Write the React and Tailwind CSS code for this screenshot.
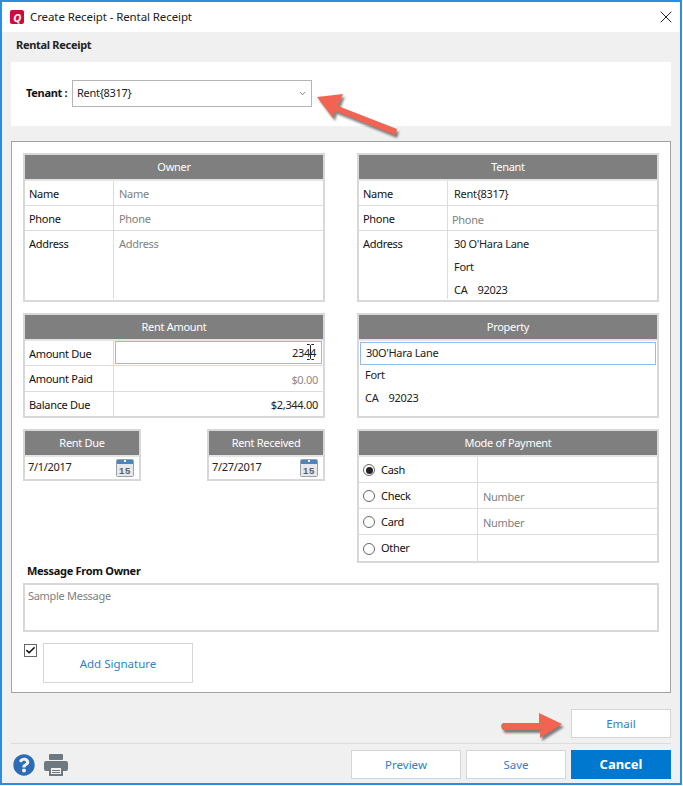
import React from 'react';
import { X, ChevronDown, Check } from 'lucide-react';
import { FaQuestionCircle } from 'react-icons/fa';

const Head = ({ children }) => (
  <div className="h-[26px] bg-[#7f7f7f] flex items-center justify-center text-white border-b-2 border-[#e4e4e4]">{children}</div>
);

const Row = ({ label, height, children, last }) => (
  <div className={`flex ${last ? '' : 'border-b border-[#dcdcdc]'}`} style={{ height }}>
    <div className="w-[89px] pl-[4px] pt-[5px] border-r border-[#dcdcdc] text-[#111]">{label}</div>
    <div className="flex-1">{children}</div>
  </div>
);

const Calendar = () => (
  <svg width="18" height="18" viewBox="0 0 18 18">
    <rect x="0.5" y="0.5" width="17" height="17" rx="1" fill="#e6e8ea" stroke="#98a2a8" />
    <rect x="1" y="1" width="16" height="4" fill="#4a86bb" />
    <rect x="8" y="1" width="2" height="2" fill="#fff" />
    <text x="9" y="15" textAnchor="middle" fontSize="9.5" fontWeight="700" letterSpacing="0.6" fill="#55606a" fontFamily="Liberation Sans">15</text>
  </svg>
);

const Printer = () => (
  <svg width="24" height="22" viewBox="0 0 24 22" className="ml-[9px]">
    <rect x="5" y="0" width="14" height="6" rx="1" fill="#6e7880" />
    <rect x="0" y="7" width="24" height="10" rx="2" fill="#6e7880" />
    <rect x="5" y="13" width="14" height="9" fill="#6e7880" />
    <rect x="7" y="14" width="10" height="6" fill="#f0f0f0" />
    <rect x="8" y="16" width="8" height="1" fill="#6e7880" />
    <rect x="8" y="18" width="8" height="1" fill="#6e7880" />
  </svg>
);

const IBeam = () => (
  <svg className="absolute right-[6px] top-[2px]" width="9" height="16" viewBox="0 0 9 16" fill="none" stroke="#222" strokeWidth="1">
    <path d="M1 0.5 H3.5 L4.5 1.5 L5.5 0.5 H8 M4.5 1.5 V14.5 M1 15.5 H3.5 L4.5 14.5 L5.5 15.5 H8" />
  </svg>
);

const DateBox = ({ title, value }) => (
  <div className="w-[118px] h-[52px] border-2 border-[#d8d8d8]">
    <Head>{title}</Head>
    <div className="flex justify-between pl-[3px] pr-[5px] pt-[2px] text-[#222]">
      <span>{value}</span>
      <Calendar />
    </div>
  </div>
);

const Radio = ({ label, on, value, height, last }) => (
  <div className={`flex ${last ? '' : 'border-b border-[#dcdcdc]'}`} style={{ height }}>
    <div className="w-[119px] pl-[4px] pt-[1px] flex items-center gap-[6px] border-r border-[#dcdcdc] text-[#111]">
      <span className="w-[12px] h-[12px] rounded-full border border-[#666] flex items-center justify-center">
        {on && <span className="w-[7px] h-[7px] rounded-full bg-[#222]" />}
      </span>
      {label}
    </div>
    <div className="flex-1 pl-[5px] pt-[6px] text-[#808080]">{value}</div>
  </div>
);

const FootBtn = ({ children, className = '' }) => (
  <button className={`h-[29px] pt-[1px] bg-white border border-[#d6d6d6] text-[#2f7fd0] text-[11.5px] tracking-normal ${className}`}>{children}</button>
);

export default function App() {
  return (
    <div className="relative w-[682px] h-[785px] border-2 border-[#2b8fe0] bg-[#f0f0f0] text-[11px] tracking-[-0.3px] overflow-hidden" style={{ fontFamily: '"Noto Sans", sans-serif' }}>
      {/* title bar */}
      <div className="h-[30px] bg-white flex items-center pl-[8px] pr-[4px]">
        <div className="w-[14px] h-[14px] rounded-[2px] bg-[#d2093c] flex items-center justify-center text-white font-bold italic text-[11px] leading-none">Q</div>
        <span className="ml-[6px] text-[11.5px] tracking-[-0.1px] text-[#222]">Create Receipt - Rental Receipt</span>
        <X className="ml-auto w-[20px] h-[20px] text-[#222]" strokeWidth={1.2} />
      </div>

      <div className="px-[9px]">
        <div className="h-[30px] pt-[5px] pl-[5px] font-bold text-[#222]">Rental Receipt</div>

        <div className="h-[64px] bg-white flex items-start pt-[18px] pl-[15px] mb-[15px]">
          <span className="font-bold text-[#111] w-[46px] pt-[5px]">Tenant :</span>
          <div className="w-[240px] h-[27px] border border-[#b4b4b4] flex items-center justify-between pl-[4px] pr-[4px] text-[#222]">
            Rent{'{'}8317{'}'}
            <ChevronDown className="w-[9px] h-[9px] text-[#555]" />
          </div>
        </div>

        {/* main form */}
        <div className="h-[552px] bg-white border border-[#a3a3a3] p-[11px]">
          <div className="grid grid-cols-[302px_302px] justify-between">
            <div className="flex flex-col gap-[11px]">
              <div className="h-[149px] border-2 border-[#d8d8d8]">
                <Head>Owner</Head>
                <Row label="Name" height={25}><div className="pl-[5px] pt-[5px] text-[#808080]">Name</div></Row>
                <Row label="Phone" height={25}><div className="pl-[5px] pt-[5px] text-[#808080]">Phone</div></Row>
                <Row label="Address" height={68} last><div className="pl-[5px] pt-[5px] text-[#808080]">Address</div></Row>
              </div>
              <div className="h-[105px] border-2 border-[#d8d8d8]">
                <Head>Rent Amount</Head>
                <Row label="Amount Due" height={25}>
                  <div className="relative h-[23px] mx-[1px] border border-[#8ebcf0] text-right pr-[5px] pt-[3px] text-[#222]">
                    2344
                    <IBeam />
                  </div>
                </Row>
                <Row label="Amount Paid" height={26}><div className="text-right pr-[5px] pt-[6px] text-[#8a8a8a]">$0.00</div></Row>
                <Row label="Balance Due" height={25} last><div className="text-right pr-[5px] pt-[5px] text-[#222]">$2,344.00</div></Row>
              </div>
              <div className="flex justify-between">
                <DateBox title="Rent Due" value="7/1/2017" />
                <DateBox title="Rent Received" value="7/27/2017" />
              </div>
            </div>

            <div className="flex flex-col gap-[11px]">
              <div className="h-[149px] border-2 border-[#d8d8d8]">
                <Head>Tenant</Head>
                <Row label="Name" height={25}><div className="pl-[6px] pt-[5px] text-[#222]">Rent{'{'}8317{'}'}</div></Row>
                <Row label="Phone" height={25}><div className="pl-[4px] pt-[6px] text-[#808080]">Phone</div></Row>
                <Row label="Address" height={68} last>
                  <div className="pl-[6px] pt-[5px] text-[#222] flex flex-col gap-[6.5px]">
                    <span>30 O'Hara Lane</span>
                    <span>Fort</span>
                    <span>CA &nbsp;&nbsp; 92023</span>
                  </div>
                </Row>
              </div>
              <div className="h-[105px] border-2 border-[#d8d8d8]">
                <Head>Property</Head>
                <div className="h-[23px] mx-[1px] mt-[1px] border border-[#8ebcf0] pl-[5px] pt-[2px] text-[#222]">30O'Hara Lane</div>
                <div className="pl-[6px] pt-[2px] text-[#222] flex flex-col gap-[6.5px]">
                  <span>Fort</span>
                  <span>CA &nbsp;&nbsp; 92023</span>
                </div>
              </div>
              <div className="h-[134px] border-2 border-[#d8d8d8]">
                <Head>Mode of Payment</Head>
                <Radio label="Cash" on height={26} />
                <Radio label="Check" value="Number" height={26} />
                <Radio label="Card" value="Number" height={26} />
                <Radio label="Other" height={26} last />
              </div>
            </div>
          </div>

          <div className="pl-[4px] h-[16px] font-bold text-[#111] flex items-center">Message From Owner</div>
          <div className="mt-[4px] h-[49px] border-2 border-[#d8d8d8] pl-[3px] pt-[3px] text-[#808080]">Sample Message</div>
          <div className="mt-[11px] flex items-start gap-[6px]">
            <div className="mt-[1px] ml-[1px] w-[13px] h-[13px] border border-[#666] flex items-center justify-center">
              <Check className="w-[11px] h-[11px] text-[#111]" strokeWidth={3.5} />
            </div>
            <button className="w-[150px] h-[40px] pt-[1px] border border-[#d6d6d6] bg-white text-[#2f7fd0] text-[11.5px] tracking-normal">Add Signature</button>
          </div>
        </div>

        {/* footer */}
        <div className="mt-[16px] flex justify-end">
          <FootBtn className="w-[100px]">Email</FootBtn>
        </div>
        <div className="mt-[5px] h-px bg-[#dcdcdc]" />
        <div className="mt-[6px] flex items-center">
          <FaQuestionCircle className="ml-[2px] w-[22px] h-[22px] text-[#2b6cb5]" />
          <Printer />
          <div className="ml-auto flex gap-[5px]">
            <FootBtn className="w-[110px]">Preview</FootBtn>
            <FootBtn className="w-[100px]">Save</FootBtn>
            <button className="w-[100px] h-[29px] pt-[1px] bg-[#0078d0] text-white font-bold text-[13px] tracking-normal">Cancel</button>
          </div>
        </div>
      </div>

      {/* red callout arrows */}
      <svg className="absolute left-[312px] top-[89px]" width="92" height="52" viewBox="0 0 92 52">
        <defs>
          <filter id="arrowBlur"><feGaussianBlur stdDeviation="1.2" /></filter>
        </defs>
        <path d="M3 6 L29 3 L24 15 L83 38 L81 44 L21 20 L19 27 Z" fill="#333" opacity="0.6" filter="url(#arrowBlur)" transform="translate(2 3)" />
        <path d="M3 6 L29 3 L24 15 L83 38 L81 44 L21 20 L19 27 Z" fill="#f26352" />
      </svg>
      <svg className="absolute left-[496px] top-[707px]" width="74" height="38" viewBox="0 0 74 38">
        <path d="M5 14 H41 V4 L64 15 L42 29 V21 H5 Q1 17 5 14 Z" fill="#333" opacity="0.6" filter="url(#arrowBlur)" transform="translate(2 3)" />
        <path d="M5 14 H41 V4 L64 15 L42 29 V21 H5 Q1 17 5 14 Z" fill="#f26352" />
      </svg>
    </div>
  );
}
